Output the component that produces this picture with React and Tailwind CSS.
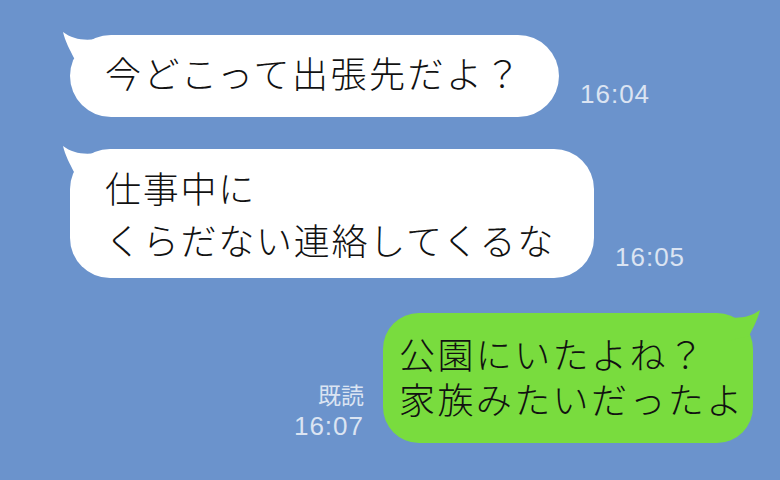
const jp = { fontFamily: '"Noto Sans CJK JP", "Noto Sans", sans-serif' };
const num = { fontFamily: '"Liberation Sans", Arial, sans-serif' };

function Tail({ color, right }) {
  return (
    <svg
      width="36"
      height="36"
      viewBox="0 0 36 36"
      className={
        right
          ? "absolute -right-[8px] -top-[4px] -scale-x-100"
          : "absolute -left-[8px] -top-[4px]"
      }
    >
      <path
        d="M1 1 C3 10 8 19 12 27 L34 32 L34 8 C22 10 10 8 1 1 Z"
        fill={color}
      />
    </svg>
  );
}

function Time({ children, className = "" }) {
  return (
    <div
      className={"text-[26px] leading-none tracking-[1px] text-[#dbe4f2] " + className}
      style={num}
    >
      {children}
    </div>
  );
}

export default function App() {
  return (
    <div className="w-[780px] h-[480px] bg-[#6b93cc] overflow-hidden flex flex-col pt-[35px]">
      {/* incoming 1 */}
      <div className="flex items-end pl-[70px] gap-[21px]">
        <div className="relative w-[489px] h-[82px] bg-white rounded-[41px] pl-[35px] pt-[11px]">
          <Tail color="#ffffff" />
          <p className="relative text-[36px] leading-[52px] tracking-[2.5px] font-light text-[#111]" style={jp}>
            今どこって出張先だよ？
          </p>
        </div>
        <Time className="mb-[10px]">16:04</Time>
      </div>

      {/* incoming 2 */}
      <div className="flex items-end pl-[70px] gap-[21px] mt-[32px]">
        <div className="relative w-[524px] h-[129px] bg-white rounded-[40px] pl-[35px] pt-[12px]">
          <Tail color="#ffffff" />
          <p className="relative text-[36px] leading-[52px] tracking-[1.75px] font-light text-[#111]" style={jp}>
            仕事中に
            <br />
            くらだない連絡してくるな
          </p>
        </div>
        <Time className="mb-[8px]">16:05</Time>
      </div>

      {/* outgoing */}
      <div className="flex items-end justify-end pr-[27px] gap-[19px] mt-[35px]">
        <div className="flex flex-col items-end gap-[7px] mb-[4px]">
          <div className="text-[23px] leading-[23px] text-[#dbe4f2]" style={jp}>
            既読
          </div>
          <Time>16:07</Time>
        </div>
        <div className="relative w-[370px] h-[130px] bg-[#79dc3e] rounded-[36px] pl-[16px] pt-[18px]">
          <Tail color="#79dc3e" right />
          <p className="relative text-[36px] leading-[45px] tracking-[2.4px] font-light text-[#111]" style={jp}>
            公園にいたよね？
            <br />
            家族みたいだったよ
          </p>
        </div>
      </div>
    </div>
  );
}
